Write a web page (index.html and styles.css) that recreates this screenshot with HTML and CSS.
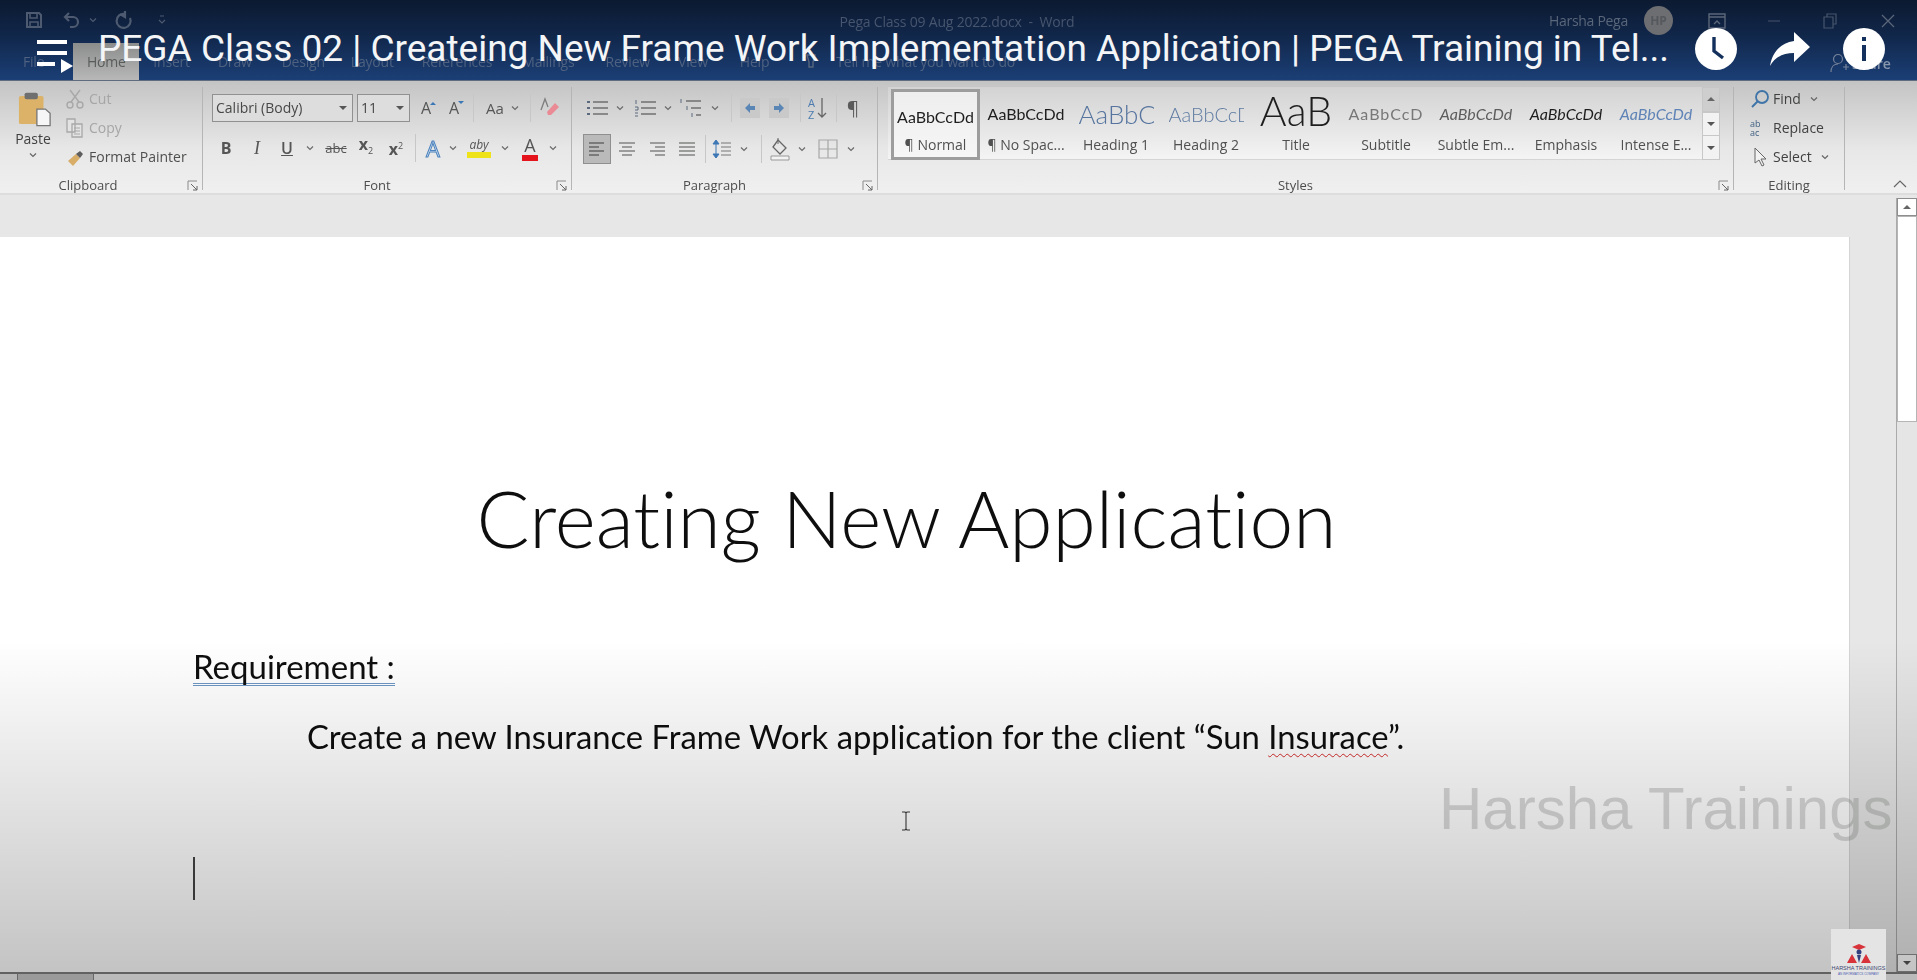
FILE: index.html
```html
<!DOCTYPE html>
<html lang="en">
<head>
    <meta charset="UTF-8">
    <title>PEGA Class 02</title>
    <link rel="stylesheet" href="styles.css">
</head>
<body>
    <svg class="defs" width="0" height="0">
        <symbol id="caret" viewBox="0 0 8 6"><path d="M1 1.5l3 3 3-3" fill="none" stroke="currentColor" stroke-width="1.2"/></symbol>
        <symbol id="launcher" viewBox="0 0 12 12"><path d="M1 10V1h9" fill="none" stroke="#8a8b8a"/><path d="M4 4l6 6M10 6v4H6" fill="none" stroke="#666"/></symbol>
    </svg>

    <div class="frame">
        <div class="titlebar">
            <div class="qat-row">
                <div class="qat">
                    <svg width="20" height="20" viewBox="0 0 20 20"><path d="M3 3h12l2 2v12H3z" fill="none" stroke="#4d5a70" stroke-width="2"/><path d="M6 3v5h7V3M6 17v-5h8v5" fill="none" stroke="#4d5a70" stroke-width="1.6"/></svg>
                    <svg class="undo" width="20" height="20" viewBox="0 0 20 20"><path d="M7 3L3 7l4 4M3 7h8a5 5 0 0 1 0 10H8" fill="none" stroke="#4d5a70" stroke-width="2.2"/></svg>
                    <svg class="qat-caret" width="8" height="6"><use href="#caret"/></svg>
                    <svg class="redo" width="20" height="20" viewBox="0 0 20 20"><path d="M12 4a7 7 0 1 0 5 4M12 1v6l-5-3" fill="none" stroke="#4d5a70" stroke-width="2.2"/></svg>
                    <svg class="qat-more" width="8" height="10" viewBox="0 0 8 10"><path d="M2 1h4M1 5l3 3 3-3" fill="none" stroke="#4d5a70" stroke-width="1.2"/></svg>
                </div>
                <div class="doc-name">Pega Class 09 Aug 2022.docx &nbsp;-&nbsp; Word</div>
                <div class="win-controls">
                    <span class="user-name">Harsha Pega</span>
                    <span class="avatar">HP</span>
                    <svg class="win-ribbon" width="18" height="16" viewBox="0 0 18 16"><path d="M1 1h16v14H1zM1 4h16M6 11l3-3 3 3" fill="none" stroke="#5b6678" stroke-width="1.4"/></svg>
                    <svg class="win-min" width="14" height="14" viewBox="0 0 14 14"><path d="M1 7h12" stroke="#3d4c66" stroke-width="1.2"/></svg>
                    <svg class="win-max" width="14" height="16" viewBox="0 0 14 16"><path d="M1 4h9v11H1zM4 4V1h9v10h-3" fill="none" stroke="#47556d" stroke-width="1.2"/></svg>
                    <svg class="win-close" width="16" height="16" viewBox="0 0 16 16"><path d="M2 2l12 12M14 2L2 14" stroke="#5b6678" stroke-width="1.3"/></svg>
                </div>
            </div>
            <div class="tabs">
                <span class="tab tab-file">File</span>
                <span class="tab tab-home">Home</span>
                <span class="tab tab-insert">Insert</span>
                <span class="tab tab-draw">Draw</span>
                <span class="tab tab-design">Design</span>
                <span class="tab tab-layout">Layout</span>
                <span class="tab tab-refs">References</span>
                <span class="tab tab-mail">Mailings</span>
                <span class="tab tab-review">Review</span>
                <span class="tab tab-view">View</span>
                <span class="tab tab-help">Help</span>
                <svg class="bulb" width="14" height="18" viewBox="0 0 14 18"><path d="M3 2h8L9 9v5H5V9z" fill="none" stroke="#56657e" stroke-width="1.4"/></svg>
                <span class="tab tab-tell">Tell me what you want to do</span>
                <span class="share">
                    <svg width="20" height="20" viewBox="0 0 20 20"><circle cx="8" cy="6" r="4.5" fill="none" stroke="#75829a" stroke-width="1.2"/><path d="M1 19c0-5 3-8 7-8M13 14h6M16 11v6" fill="none" stroke="#75829a" stroke-width="1.2"/></svg>
                    <span>Share</span>
                </span>
            </div>
        </div>

        <div class="ribbon">
            <section class="group group-clipboard">
                <div class="clip-body">
                    <div class="paste">
                        <svg width="34" height="38" viewBox="0 0 36 46" preserveAspectRatio="none">
                            <rect x="1" y="6" width="26" height="34" rx="2" fill="#dcb168"/>
                            <rect x="7" y="2" width="14" height="8" rx="2" fill="#6f6f6f"/>
                            <path d="M20 22h9l5 5v15H20z" fill="#f6f6f6" stroke="#777" stroke-width="1.4"/>
                        </svg>
                        <span>Paste</span>
                        <svg class="small-caret" width="8" height="6"><use href="#caret"/></svg>
                    </div>
                    <div class="clip-list">
                        <div class="clip-item muted">
                            <svg width="18" height="20" viewBox="0 0 18 20"><path d="M4 1l9 12M14 1L5 13" stroke="#a7a8a7" stroke-width="1.4"/><circle cx="4" cy="16" r="3" fill="none" stroke="#a7a8a7" stroke-width="1.4"/><circle cx="14" cy="16" r="3" fill="none" stroke="#a7a8a7" stroke-width="1.4"/></svg>
                            <span>Cut</span>
                        </div>
                        <div class="clip-item muted">
                            <svg width="18" height="20" viewBox="0 0 18 20"><path d="M1 1h8v13H1zM6 6h10v13H6z" fill="#e2e3e2" stroke="#a7a8a7" stroke-width="1.3"/><path d="M8 10h6M8 13h6M8 16h6" stroke="#a7a8a7"/></svg>
                            <span>Copy</span>
                        </div>
                        <div class="clip-item">
                            <svg width="18" height="20" viewBox="0 0 18 20"><path d="M2 14l8-7 4 4-7 8z" fill="#d8ad68"/><path d="M10 7l4 4 3-4-3-3z" fill="#5c5d5c"/></svg>
                            <span>Format Painter</span>
                        </div>
                    </div>
                </div>
                <div class="group-label">Clipboard<svg class="launcher" width="12" height="12"><use href="#launcher"/></svg></div>
            </section>

            <section class="group group-font">
                <div class="tool-row font-row-1">
                    <div class="combo">Calibri (Body)<i class="combo-arrow"></i></div>
                    <span></span>
                    <div class="combo">11<i class="combo-arrow"></i></div>
                    <span class="tool">A<sup class="mini-up"></sup></span>
                    <span class="tool">A<sup class="mini-down"></sup></span>
                    <i class="vsep"></i>
                    <span class="tool tool-aa">Aa</span>
                    <svg class="caret-ic" width="8" height="6"><use href="#caret"/></svg>
                    <i class="vsep"></i>
                    <svg class="ic" width="22" height="22" viewBox="0 0 22 22"><path d="M9 15l8-9 4 4-8 8h-3z" fill="#e98a95"/><path d="M3 13L7 2l3 8" fill="none" stroke="#7c7d7c" stroke-width="1.3"/></svg>
                </div>
                <div class="tool-row font-row-2">
                    <b class="tool">B</b>
                    <i class="tool tool-i">I</i>
                    <span class="tool tool-u">U</span>
                    <svg class="caret-ic" width="8" height="6"><use href="#caret"/></svg>
                    <span class="tool tool-abc">abc</span>
                    <span class="tool tool-sub">x<sub>2</sub></span>
                    <span class="tool tool-sub">x<sup>2</sup></span>
                    <i class="vsep"></i>
                    <span class="tool tool-effect">A</span>
                    <svg class="caret-ic" width="8" height="6"><use href="#caret"/></svg>
                    <span class="tool tool-hl">aby<i class="swatch swatch-yellow"></i></span>
                    <svg class="caret-ic" width="8" height="6"><use href="#caret"/></svg>
                    <span class="tool tool-color">A<i class="swatch swatch-red"></i></span>
                    <svg class="caret-ic" width="8" height="6"><use href="#caret"/></svg>
                </div>
                <div class="group-label">Font<svg class="launcher" width="12" height="12"><use href="#launcher"/></svg></div>
            </section>

            <section class="group group-para">
                <div class="tool-row para-row-1">
                    <svg class="ic" width="24" height="20" viewBox="0 0 24 20"><path d="M8 4h15M8 10h15M8 16h15" stroke="#6f706f" stroke-width="1.3"/><path d="M2 3h3v2H2zM2 9h3v2H2zM2 15h3v2H2z" fill="#5d6a7e"/></svg>
                    <svg class="caret-ic" width="8" height="6"><use href="#caret"/></svg>
                    <svg class="ic" width="24" height="20" viewBox="0 0 24 20"><path d="M8 4h15M8 10h15M8 16h15" stroke="#6f706f" stroke-width="1.3"/><path d="M3 2v4M2 9h3v3H2M2 15h3M2 18h3" stroke="#5d6a7e" fill="none"/></svg>
                    <svg class="caret-ic" width="8" height="6"><use href="#caret"/></svg>
                    <svg class="ic" width="24" height="20" viewBox="0 0 24 20"><path d="M7 3h15M12 10h10M17 17h5" stroke="#6f706f" stroke-width="1.3"/><path d="M2 1v4M8 8v4M13 15v4" stroke="#5d6a7e"/></svg>
                    <svg class="caret-ic" width="8" height="6"><use href="#caret"/></svg>
                    <i class="vsep"></i>
                    <svg class="ic" width="20" height="22" viewBox="0 0 20 22"><path d="M0 1h20v20H0z" fill="#c8c9c8"/><path d="M5 11l5-5v3h5v4h-5v3z" fill="#5a86b5"/></svg>
                    <svg class="ic" width="20" height="22" viewBox="0 0 20 22"><path d="M0 1h20v20H0z" fill="#c8c9c8"/><path d="M15 11l-5-5v3H5v4h5v3z" fill="#5a86b5"/></svg>
                    <i class="vsep"></i>
                    <svg class="ic" width="20" height="24" viewBox="0 0 20 24"><text x="0" y="11" font-size="11" fill="#4c7bb0" font-family="Open Sans">A</text><text x="0" y="23" font-size="11" fill="#4c7bb0" font-family="Open Sans">Z</text><path d="M14 2v19M10 17l4 4 4-4" fill="none" stroke="#666" stroke-width="1.3"/></svg>
                    <i class="vsep"></i>
                    <span class="tool tool-para">¶</span>
                </div>
                <div class="tool-row para-row-2">
                    <span class="align-box"><svg width="18" height="16" viewBox="0 0 18 16"><path d="M1 2h15M1 6h10M1 10h15M1 14h10" stroke="#7a7b7a" stroke-width="2"/></svg></span>
                    <svg class="ic" width="18" height="16" viewBox="0 0 18 16"><path d="M1 2h16M4 6h10M1 10h16M4 14h10" stroke="#9b9c9b" stroke-width="2"/></svg>
                    <svg class="ic" width="18" height="16" viewBox="0 0 18 16"><path d="M2 2h15M7 6h10M2 10h15M7 14h10" stroke="#9b9c9b" stroke-width="2"/></svg>
                    <svg class="ic" width="18" height="16" viewBox="0 0 18 16"><path d="M1 2h16M1 6h16M1 10h16M1 14h16" stroke="#838483" stroke-width="1.4"/></svg>
                    <i class="vsep"></i>
                    <svg class="ic" width="20" height="20" viewBox="0 0 20 20"><path d="M9 4h10M9 8h10M9 12h10M9 16h10" stroke="#777" stroke-width="1.2"/><path d="M4 1l3 4H1zM4 19l3-4H1zM4 5v10" fill="#3c77b5" stroke="#3c77b5"/></svg>
                    <svg class="caret-ic" width="8" height="6"><use href="#caret"/></svg>
                    <i class="vsep"></i>
                    <svg class="ic" width="22" height="24" viewBox="0 0 22 24"><path d="M9 3l8 8-6 6-7-7z" fill="none" stroke="#666" stroke-width="1.3"/><path d="M9 1v6" stroke="#666"/><path d="M2 19h18v4H2z" fill="#f3f3f3" stroke="#999"/></svg>
                    <svg class="caret-ic" width="8" height="6"><use href="#caret"/></svg>
                    <svg class="ic" width="20" height="20" viewBox="0 0 20 20"><path d="M1 1h18v18H1zM10 1v18M1 10h18" fill="none" stroke="#a6a7a6" stroke-width="1.2"/></svg>
                    <svg class="caret-ic" width="8" height="6"><use href="#caret"/></svg>
                </div>
                <div class="group-label">Paragraph<svg class="launcher" width="12" height="12"><use href="#launcher"/></svg></div>
            </section>

            <section class="group group-styles">
                <div class="gallery">
                    <div class="style-item style-active"><div class="sample">AaBbCcDd</div><div class="style-name">¶ Normal</div></div>
                    <div class="style-item"><div class="sample">AaBbCcDd</div><div class="style-name">¶ No Spac...</div></div>
                    <div class="style-item"><div class="sample sample-h1">AaBbCc</div><div class="style-name">Heading 1</div></div>
                    <div class="style-item"><div class="sample sample-h2">AaBbCcD</div><div class="style-name">Heading 2</div></div>
                    <div class="style-item"><div class="sample sample-title">AaB</div><div class="style-name">Title</div></div>
                    <div class="style-item"><div class="sample sample-sub">AaBbCcD</div><div class="style-name">Subtitle</div></div>
                    <div class="style-item"><div class="sample sample-subtle">AaBbCcDd</div><div class="style-name">Subtle Em...</div></div>
                    <div class="style-item"><div class="sample sample-em">AaBbCcDd</div><div class="style-name">Emphasis</div></div>
                    <div class="style-item"><div class="sample sample-intense">AaBbCcDd</div><div class="style-name">Intense E...</div></div>
                    <div class="gallery-scroll">
                        <span class="gs-btn gs-up"><i class="arrow-up"></i></span>
                        <span class="gs-btn"><i class="arrow-down"></i></span>
                        <span class="gs-btn gs-more"><i class="arrow-down"></i></span>
                    </div>
                </div>
                <div class="group-label">Styles<svg class="launcher" width="12" height="12"><use href="#launcher"/></svg></div>
            </section>

            <section class="group group-edit">
                <div class="edit-list">
                    <div class="edit-item">
                        <svg width="20" height="20" viewBox="0 0 20 20"><circle cx="12" cy="8" r="6" fill="none" stroke="#3f74a8" stroke-width="1.8"/><path d="M8 12l-6 6" stroke="#3f74a8" stroke-width="2"/></svg>
                        <span>Find</span>
                        <svg class="small-caret" width="8" height="6"><use href="#caret"/></svg>
                    </div>
                    <div class="edit-item">
                        <span class="replace-ic">ab<br>ac</span>
                        <span>Replace</span>
                    </div>
                    <div class="edit-item">
                        <svg width="20" height="20" viewBox="0 0 20 20"><path d="M5 1v15l4-3 3 6 2-1-3-6h5z" fill="#f2f2f2" stroke="#666"/></svg>
                        <span>Select</span>
                        <svg class="small-caret" width="8" height="6"><use href="#caret"/></svg>
                    </div>
                </div>
                <div class="group-label group-label-plain">Editing</div>
            </section>

            <svg class="collapse" width="14" height="8" viewBox="0 0 14 8"><path d="M1 7l6-6 6 6" fill="none" stroke="#666" stroke-width="1.2"/></svg>
        </div>

        <div class="workspace">
            <div class="doc-area">
                <div class="page">
                    <h1 class="doc-title">Creating New Application</h1>
                    <div class="doc-heading"><span>Requirement :</span></div>
                    <p class="doc-text">Create a new Insurance Frame Work application for the client “Sun <span class="misspelt">Insurace</span>”.</p>
                    <div class="text-cursor"></div>
                </div>
            </div>
            <div class="vscroll">
                <span class="sb-btn"><i class="arrow-up"></i></span>
                <span class="sb-thumb"></span>
                <span class="sb-track"></span>
                <span class="sb-btn"><i class="arrow-down"></i></span>
            </div>
        </div>
        <div class="hscroll">
            <span class="hs-btn"></span>
            <span class="hs-thumb"></span>
            <span class="hs-track"></span>
        </div>

        <div class="bottom-shade"></div>
        <svg class="ibeam" width="10" height="20" viewBox="0 0 10 20"><path d="M1 1h3l1 1 1-1h3M5 2v16M1 19h3l1-1 1 1h3" fill="none" stroke="#333" stroke-width="1.1"/></svg>
        <div class="watermark">Harsha Trainings</div>
        <div class="logo">
            <svg width="26" height="22" viewBox="0 0 26 22">
                <path d="M13 1l7 3-7 3-7-3z" fill="#d8323a"/>
                <circle cx="13" cy="9" r="2.5" fill="#33407f"/>
                <path d="M1 20l5-9 5 9zM15 20l5-9 5 9z" fill="#d8323a"/>
                <path d="M11 12h4l-2 8z" fill="#33407f"/>
            </svg>
            <div class="logo-name">HARSHA TRAININGS</div>
            <div class="logo-sub">AN INFORMATICS COMPANY</div>
        </div>

        <div class="player-bar">
            <svg class="playlist-ic" width="38" height="34" viewBox="0 0 38 34">
                <path d="M0 0h30v4H0zM0 11h30v4H0zM0 22h18v4H0z" fill="#fff"/>
                <path d="M24 19l12 7-12 7z" fill="#fff"/>
            </svg>
            <div class="video-title">PEGA Class 02 | Createing New Frame Work Implementation Application | PEGA Training in Tel...</div>
            <div class="player-actions">
                <svg width="42" height="42" viewBox="0 0 42 42"><circle cx="21" cy="21" r="21" fill="#fff"/><path d="M19 9v14l9 7" fill="none" stroke="#14305c" stroke-width="3.4"/></svg>
                <svg width="42" height="42" viewBox="0 0 42 42"><path d="M25 4l16 15-16 15v-9C14 25 6 29 1 38c2-13 10-23 24-25z" fill="#fff"/></svg>
                <svg width="42" height="42" viewBox="0 0 42 42"><circle cx="21" cy="21" r="21" fill="#fff"/><path d="M19 9h4v4h-4zM19 17h4v16h-4z" fill="#14305c"/></svg>
            </div>
        </div>
    </div>
</body>
</html>
```

FILE: styles.css
```css
* {
    box-sizing: border-box;
}

html, body {
    margin: 0;
    height: 100%;
    overflow: hidden;
}

.defs {
    position: absolute;
}

.frame {
    position: relative;
    width: 1917px;
    height: 980px;
    overflow: hidden;
    display: flex;
    flex-direction: column;
    font-family: "Open Sans", sans-serif;
    color: #4a4b4a;
    background: #e6e7e6;
}

/* word title bar */
.titlebar {
    height: 81px;
    flex: none;
    background: linear-gradient(#0c1a31, #102547 40%, #1b3f76);
    border-bottom: 1px solid #5f6c80;
}

.qat-row {
    height: 43px;
    display: flex;
    align-items: flex-start;
    padding-top: 10px;
    position: relative;
    filter: blur(0.5px);
}

.qat {
    display: flex;
    align-items: center;
    padding-left: 24px;
    width: 640px;
}

.undo {
    margin-left: 18px;
}

.qat-caret {
    margin-left: 7px;
    color: #4d5a70;
}

.redo {
    margin-left: 16px;
}

.qat-more {
    margin-left: 25px;
}

.doc-name {
    width: 640px;
    text-align: center;
    font-size: 14px;
    line-height: 24px;
    margin-left: -3px;
    color: #47556e;
    letter-spacing: -0.2px;
}

.win-controls {
    display: flex;
    align-items: center;
    margin-left: 272px;
    font-size: 14px;
    color: #5a6679;
    margin-top: -4px;
}

.user-name {
    width: 92px;
    letter-spacing: -0.3px;
}

.avatar {
    width: 29px;
    height: 29px;
    border-radius: 50%;
    background: #6c6e71;
    color: #55585c;
    font-size: 12px;
    font-weight: 700;
    line-height: 29px;
    text-align: center;
    margin-left: 3px;
}

.win-ribbon {
    margin-left: 35px;
}

.win-min {
    margin-left: 41px;
}

.win-max {
    margin-left: 42px;
}

.win-close {
    margin-left: 43px;
}

.tabs {
    height: 37px;
    display: flex;
    align-items: center;
    font-size: 14px;
    color: #4e6180;
    position: relative;
    filter: blur(0.5px);
}

.tab {
    flex: none;
    letter-spacing: -0.2px;
}

.tab-file {
    margin-left: 23px;
}

.tab-home {
    margin-left: 29px;
    width: 66px;
    height: 37px;
    line-height: 37px;
    text-align: center;
    color: #5a5b5b;
    background: linear-gradient(#8b8c8c, #b7b8b7);
}

.tab-insert { margin-left: 14px; }
.tab-draw { margin-left: 28px; }
.tab-design { margin-left: 30px; }
.tab-layout { margin-left: 26px; }
.tab-refs { margin-left: 28px; }
.tab-mail { margin-left: 30px; }
.tab-review { margin-left: 31px; }
.tab-view { margin-left: 28px; }
.tab-help { margin-left: 32px; }

.bulb {
    margin-left: 35px;
}

.tab-tell {
    margin-left: 18px;
}

.share {
    position: absolute;
    left: 1830px;
    top: 10px;
    display: flex;
    align-items: center;
    gap: 2px;
    color: #8997ad;
    font-weight: 600;
}

/* ribbon */
.ribbon {
    height: 114px;
    flex: none;
    display: flex;
    padding-top: 6px;
    position: relative;
    background: linear-gradient(#c3c4c3, #e6e7e6 60%, #eff0ef);
    border-bottom: 2px solid #dcdddc;
    filter: blur(0.4px);
}

.group {
    position: relative;
    height: 103px;
    flex: none;
    border-right: 1px solid #b4b5b4;
    padding-top: 7px;
}

.group-clipboard { width: 203px; }
.group-font { width: 369px; padding-left: 9px; }
.group-para { width: 306px; padding-left: 10px; }
.group-styles { width: 856px; padding-left: 10px; padding-top: 0; }
.group-edit { width: 111px; }

.group-label {
    position: absolute;
    left: 0;
    right: 0;
    bottom: -4px;
    padding-right: 20px;
    text-align: center;
    font-size: 13px;
    line-height: 18px;
    color: #4c4d4c;
}

.group-clipboard .group-label {
    padding-right: 26px;
}

.group-label-plain {
    padding-right: 0;
}

.launcher {
    position: absolute;
    right: 3px;
    top: 4px;
}

/* clipboard */
.clip-body {
    display: flex;
}

.paste {
    width: 66px;
    display: flex;
    flex-direction: column;
    align-items: center;
    font-size: 14px;
    line-height: 20px;
    color: #3f403f;
    margin-top: -3px;
}

.paste svg:first-child {
    margin-left: 3px;
}

.small-caret {
    color: #666;
    margin-top: 3px;
}

.clip-list {
    display: flex;
    flex-direction: column;
    gap: 8px;
    margin-top: -6px;
}

.clip-item {
    display: flex;
    align-items: center;
    gap: 5px;
    height: 21px;
    font-size: 14px;
    color: #4e4f4e;
    white-space: nowrap;
}

.clip-item.muted {
    color: #a5a6a5;
}

/* tool rows */
.tool-row {
    display: grid;
    align-items: center;
    justify-items: center;
    height: 28px;
}

.tool-row + .tool-row {
    margin-top: 12px;
}

.font-row-1 { grid-template-columns: 141px 4px 53px 32px 24px 15px 28px 12px 18px 20px; }
.font-row-2 { grid-template-columns: 28px 34px 26px 20px 32px 28px 32px 6px 30px 10px 42px 10px 40px 6px; }
.para-row-1 { grid-template-columns: 30px 16px 34px 12px 34px 14px 18px 20px 38px 4px 32px 4px 30px; }
.para-row-2 { grid-template-columns: 30px 30px 30px 30px 6px 28px 16px 18px 20px 24px 28px 18px; }

.combo {
    position: relative;
    justify-self: stretch;
    height: 28px;
    border: 1px solid #8f908f;
    background: #dcdddc;
    font-size: 14px;
    line-height: 26px;
    padding-left: 3px;
    color: #474847;
}

.combo-arrow {
    position: absolute;
    right: 5px;
    top: 11px;
    border: 4px solid transparent;
    border-top-color: #555;
}

.tool {
    position: relative;
    font-size: 16px;
    color: #555655;
    line-height: 20px;
}

.tool-aa {
    font-size: 15px;
}

.caret-ic {
    color: #6a6b6a;
}

.vsep {
    width: 1px;
    height: 28px;
    background: #c6c7c6;
}

.mini-up, .mini-down {
    position: absolute;
    right: -5px;
    top: 1px;
    border: 3px solid transparent;
}

.mini-up {
    border-bottom-color: #3c77b5;
}

.mini-down {
    top: 3px;
    border-top-color: #3c77b5;
}

.tool-i {
    font-family: "Liberation Serif", serif;
    font-size: 18px;
}

.tool-u {
    font-weight: 600;
    text-decoration: underline;
}

.tool-abc {
    font-size: 13px;
    text-decoration: line-through;
}

.tool-sub {
    font-weight: 700;
}

.tool-sub sub, .tool-sub sup {
    font-size: 9px;
    font-weight: 400;
}

.tool-effect {
    font-size: 22px;
    font-weight: 400;
    color: #cfe0f2;
    -webkit-text-stroke: 1px #4c82bd;
}

.tool-hl {
    font-size: 12px;
    line-height: 14px;
    padding-bottom: 6px;
    font-style: italic;
}

.tool-color {
    font-size: 18px;
    line-height: 19px;
    padding-bottom: 6px;
}

.swatch {
    position: absolute;
    left: -2px;
    right: -2px;
    bottom: 0;
    height: 6px;
}

.swatch-yellow { background: #eee318; }
.swatch-red { background: #e5141c; }

.tool-para {
    font-size: 19px;
    color: #5a5b5a;
}

.align-box {
    width: 28px;
    height: 30px;
    display: flex;
    align-items: center;
    justify-content: center;
    background: #b9bab9;
    border: 1px solid #8e8f8e;
}

/* styles gallery */
.gallery {
    position: relative;
    display: flex;
    width: 832px;
    height: 73px;
    padding-left: 3px;
    background: linear-gradient(#d2d3d2, #f3f4f3);
    border-bottom: 1px solid #d4d5d4;
}

.style-item {
    flex: none;
    width: 90px;
    height: 73px;
    text-align: center;
    overflow: hidden;
}

.style-active {
    width: 89px;
    margin-right: 1px;
    border: 3px solid #9c9d9c;
    background: linear-gradient(#eeeeee, #f6f6f6);
    margin-top: 2px;
    height: 71px;
}

.sample {
    height: 47px;
    line-height: 54px;
    font-family: Lato, sans-serif;
    font-size: 16px;
    color: #1d1e1d;
    white-space: nowrap;
    overflow: hidden;
}

.style-active .sample {
    height: 42px;
    line-height: 49px;
}

.style-name {
    font-size: 14px;
    line-height: 20px;
    margin-top: 1px;
    color: #4f504f;
    white-space: nowrap;
}

.sample-h1 {
    width: 75px;
    margin: 0 auto;
    text-align: left;
    font-size: 26px;
    font-weight: 300;
    color: #56749f;
}

.sample-h2 {
    width: 75px;
    margin: 0 auto;
    text-align: left;
    font-size: 20px;
    font-weight: 300;
    color: #607ca3;
}

.sample-title {
    font-size: 41px;
    font-weight: 300;
    line-height: 47px;
}

.sample-sub {
    font-size: 16px;
    letter-spacing: 1px;
    color: #777877;
}

.sample-subtle {
    font-style: italic;
    color: #5c5d5c;
}

.sample-em {
    font-style: italic;
    color: #1d1e1d;
}

.sample-intense {
    font-style: italic;
    color: #5f83b6;
}

.gallery-scroll {
    position: absolute;
    right: 0;
    top: 0;
    width: 18px;
    height: 73px;
    display: flex;
    flex-direction: column;
}

.gs-btn {
    flex: 1;
    display: flex;
    align-items: center;
    justify-content: center;
    border: 1px solid #c6c7c6;
    background: #f1f2f1;
}

.gs-up {
    background: #cdcecd;
}

.gs-more {
    border-top: 0;
}

.arrow-up, .arrow-down {
    display: block;
    border: 4px solid transparent;
}

.arrow-up {
    border-bottom-color: #666;
    margin-top: -4px;
}

.arrow-down {
    border-top-color: #555;
    margin-top: 4px;
}

/* editing */
.edit-list {
    display: flex;
    flex-direction: column;
    gap: 8px;
    padding-left: 16px;
    margin-top: -6px;
}

.edit-item {
    display: flex;
    align-items: center;
    gap: 3px;
    height: 21px;
    font-size: 14px;
    color: #3f403f;
}

.edit-item .small-caret {
    margin: 0 0 0 6px;
}

.replace-ic {
    width: 20px;
    font-size: 9px;
    line-height: 9px;
    color: #3f5f82;
}

.collapse {
    position: absolute;
    right: 10px;
    bottom: 5px;
}

/* document */
.workspace {
    flex: 1;
    min-height: 0;
    display: flex;
}

.doc-area {
    flex: 1;
    padding-top: 42px;
    overflow: hidden;
}

.page {
    width: 1850px;
    height: 800px;
    background: #fff;
    padding: 0 229px 0 193px;
    border-right: 1px solid #d4d5d4;
    font-family: Lato, sans-serif;
    font-variant-ligatures: none;
    color: #0e0e0e;
    filter: blur(0.3px);
}

.doc-title {
    margin: 0;
    padding-top: 231px;
    text-align: center;
    font-size: 78.5px;
    font-weight: 300;
    line-height: 100px;
    white-space: nowrap;
}

.doc-heading {
    margin-top: 78px;
    font-size: 33px;
    line-height: 40px;
}

.doc-heading span {
    display: inline-block;
    line-height: 34px;
    border-bottom: 3px double #6d97c4;
}

.doc-text {
    margin: 31px 0 0 114px;
    font-size: 32.8px;
    line-height: 40px;
    white-space: nowrap;
}

.misspelt {
    text-decoration: underline wavy #d42b2b 1px;
    text-underline-offset: 4px;
}

.text-cursor {
    width: 2px;
    height: 43px;
    margin-top: 100px;
    background: #444;
}

.vscroll {
    width: 21px;
    flex: none;
    margin-top: 3px;
    display: flex;
    flex-direction: column;
    border-left: 1px solid #a9aaa9;
    background: #f1f1f1;
}

.sb-btn {
    height: 18px;
    display: flex;
    align-items: center;
    justify-content: center;
    background: #fff;
    border: 1px solid #8d8e8d;
}

.sb-thumb {
    height: 206px;
    background: #fff;
    border: 1px solid #b4b5b4;
}

.sb-track {
    flex: 1;
    background: #e4e5e4;
}

.hscroll {
    height: 8px;
    flex: none;
    display: flex;
    background: #f4f4f4;
    border-top: 2px solid #7e7f7e;
}

.hs-btn {
    width: 18px;
    background: #eee;
    border-right: 1px solid #888;
}

.hs-thumb {
    width: 76px;
    background: #c9cac9;
    border-right: 1px solid #888;
}

.hs-track {
    flex: 1;
}

/* things lying over the video */
.bottom-shade {
    position: absolute;
    left: 0;
    right: 0;
    top: 640px;
    bottom: 0;
    background: linear-gradient(rgba(0, 0, 0, 0), rgba(0, 0, 0, 0.24));
    pointer-events: none;
}

.ibeam {
    position: absolute;
    left: 901px;
    top: 811px;
}

.watermark {
    position: absolute;
    left: 1439px;
    top: 772px;
    font-family: "Liberation Sans", sans-serif;
    font-size: 60px;
    line-height: 74px;
    color: rgba(110, 112, 110, 0.3);
    white-space: nowrap;
    filter: blur(0.6px);
}

.logo {
    position: absolute;
    left: 1831px;
    top: 929px;
    width: 55px;
    height: 51px;
    background: #e4e4e4;
    display: flex;
    flex-direction: column;
    align-items: center;
    padding-top: 14px;
    overflow: hidden;
}

.logo-name {
    font-family: "Liberation Sans", sans-serif;
    font-size: 5.5px;
    line-height: 7px;
    color: #3b4470;
    white-space: nowrap;
}

.logo-sub {
    font-family: "Liberation Sans", sans-serif;
    font-size: 3px;
    line-height: 4px;
    color: #4c5cb0;
    white-space: nowrap;
}

.player-bar {
    position: absolute;
    left: 37px;
    top: 28px;
    width: 1880px;
    height: 42px;
    display: flex;
    align-items: center;
}

.playlist-ic {
    margin-top: 15px;
    flex: none;
}

.video-title {
    flex: none;
    width: 1575px;
    margin-left: 23px;
    font-family: Roboto, sans-serif;
    font-size: 37px;
    line-height: 42px;
    color: #f4f5f7;
    white-space: nowrap;
}

.player-actions {
    display: flex;
    gap: 32px;
    margin-left: 22px;
}
```
